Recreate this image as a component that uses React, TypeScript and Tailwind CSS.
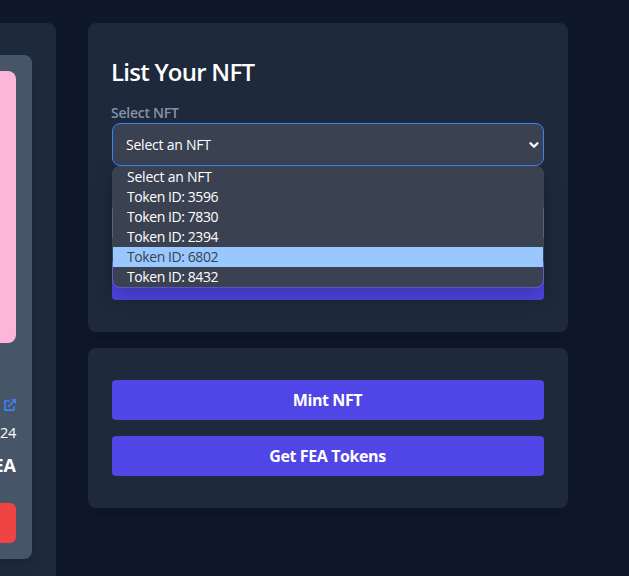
import { FiChevronDown } from "react-icons/fi";

const options = [
  "Select an NFT",
  "Token ID: 3596",
  "Token ID: 7830",
  "Token ID: 2394",
  "Token ID: 6802",
  "Token ID: 8432",
];

function NftCard() {
  return (
    <section className="flex h-[600px] w-14 shrink-0 justify-end overflow-hidden rounded-tr-lg bg-[#1e293b] pt-8 pr-6 shadow-lg">
      <article className="flex h-[504px] w-8 flex-col items-end overflow-hidden rounded-r-lg bg-[#475569] pt-4 pr-4 whitespace-nowrap text-white shadow-lg">
        <div className="h-[272px] w-4 shrink-0 rounded-r-lg bg-[#fbb6da]" />
        <a className="mt-[56px] flex h-3 justify-end text-[#3b82f6]" aria-label="View">
          <svg className="h-3 w-3" viewBox="0 0 12 12" fill="none" stroke="currentColor" strokeWidth="1.7" strokeLinejoin="round">
            <path d="M6 2H.9v9.1H10V7.5M4 8l6-6" />
            <path d="M7 0h5v5z" fill="currentColor" stroke="none" />
          </svg>
        </a>
        <div className="mt-[12px] flex h-5 w-4 justify-end text-[14.5px] leading-5 tracking-[-0.3px]">24</div>
        <div className="mt-[8px] flex h-7 w-4 justify-end text-lg leading-7 font-bold">EA</div>
        <div className="mt-[24px] h-10 w-4 shrink-0 rounded-r-md bg-[#ef4444]" />
      </article>
    </section>
  );
}

function ActionButton({ children }: { children: string }) {
  return (
    <button className="flex h-10 w-full items-center justify-center rounded bg-[#4f46e5] pr-px text-base font-bold tracking-[-0.4px] text-white">
      {children}
    </button>
  );
}

export default function App() {
  return (
    <main className="flex h-[576px] w-[629px] gap-8 overflow-hidden bg-[#0f172a] pt-[23px] font-['Open_Sans','Noto_Sans',sans-serif]">
      <NftCard />
      <div className="flex w-[480px] flex-col gap-4">
        <section className="flex h-[309px] flex-col rounded-lg bg-[#1e293b] px-6 pt-[33px] shadow-lg">
          <h2 className="-ml-px h-8 text-2xl leading-8 font-semibold tracking-[-0.75px] text-white">List Your NFT</h2>
          <label className="-ml-px mt-[15px] h-5 text-sm leading-5 font-semibold tracking-[-0.25px] text-[#8492a8]">
            Select NFT
          </label>
          <div className="relative">
            <div className="flex h-[43px] items-center justify-between rounded-lg border border-[#3b82f6] bg-[#3a4252] pr-[2px] pl-[13px] text-sm tracking-[-0.23px] text-white">
              <span>Select an NFT</span>
              <FiChevronDown className="h-3.5 w-3.5" strokeWidth={4} />
            </div>
            <ul className="absolute top-[43px] left-0 z-10 w-full overflow-hidden rounded-lg border border-white/15 bg-[#3a4252] bg-clip-padding text-sm leading-5 text-white shadow-[0_8px_20px_rgba(0,0,0,0.25)]">
              {options.map((option) => (
                <li
                  key={option}
                  className={
                    option === "Token ID: 6802"
                      ? "h-5 bg-[#99c8ff] pl-[14px] tracking-[-0.42px] text-[#3a4252]"
                      : option === "Select an NFT"
                        ? "h-5 pl-[14px] tracking-[-0.23px]"
                        : "h-5 pl-[14px] tracking-[-0.42px]"
                  }
                >
                  {option}
                </li>
              ))}
            </ul>
          </div>
          <div className="mt-9 h-[42px] rounded-lg border border-[#4b5563] bg-[#374151]" />
          <div className="mt-4">
            <ActionButton>List NFT</ActionButton>
          </div>
        </section>
        <section className="flex h-40 flex-col gap-4 rounded-lg bg-[#1e293b] px-6 pt-8 shadow-lg">
          <ActionButton>Mint NFT</ActionButton>
          <ActionButton>Get FEA Tokens</ActionButton>
        </section>
      </div>
    </main>
  );
}
